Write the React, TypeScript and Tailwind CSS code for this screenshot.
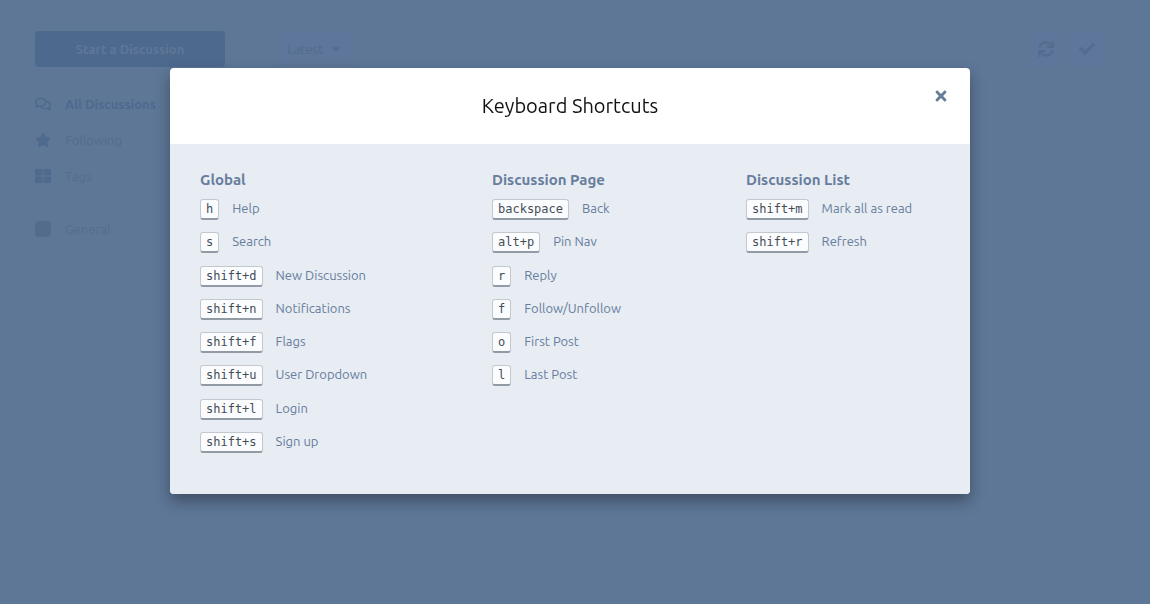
import { FaCaretDown, FaCheck, FaRegComments, FaStar, FaSync, FaThLarge, FaTimes } from 'react-icons/fa';

type Shortcut = { keys: string; label: string };

const groups: { title: string; shortcuts: Shortcut[] }[] = [
  {
    title: 'Global',
    shortcuts: [
      { keys: 'h', label: 'Help' },
      { keys: 's', label: 'Search' },
      { keys: 'shift+d', label: 'New Discussion' },
      { keys: 'shift+n', label: 'Notifications' },
      { keys: 'shift+f', label: 'Flags' },
      { keys: 'shift+u', label: 'User Dropdown' },
      { keys: 'shift+l', label: 'Login' },
      { keys: 'shift+s', label: 'Sign up' },
    ],
  },
  {
    title: 'Discussion Page',
    shortcuts: [
      { keys: 'backspace', label: 'Back' },
      { keys: 'alt+p', label: 'Pin Nav' },
      { keys: 'r', label: 'Reply' },
      { keys: 'f', label: 'Follow/Unfollow' },
      { keys: 'o', label: 'First Post' },
      { keys: 'l', label: 'Last Post' },
    ],
  },
  {
    title: 'Discussion List',
    shortcuts: [
      { keys: 'shift+m', label: 'Mark all as read' },
      { keys: 'shift+r', label: 'Refresh' },
    ],
  },
];

function IndexPage() {
  return (
    <div className="mx-auto flex max-w-[1140px] gap-[51px] px-[35px] pt-[31px] leading-5 text-[#536c8f]">
      <nav className="w-[190px] shrink-0">
        <button className="h-9 w-full rounded bg-[#4d698e] font-bold text-[#5e7797]">Start a Discussion</button>
        <ul className="mt-[19px]">
          <li>
            <a href="#all" className="flex h-9 items-center gap-3.5 font-bold text-[#4d698e]">
              <FaRegComments className="size-4" />
              All Discussions
            </a>
          </li>
          <li>
            <a href="#following" className="flex h-9 items-center gap-3.5">
              <FaStar className="size-4 text-[#4f6a8f]" />
              Following
            </a>
          </li>
          <li>
            <a href="#tags" className="flex h-9 items-center gap-3.5">
              <FaThLarge className="size-4 text-[#4f6a8f]" />
              Tags
            </a>
          </li>
          <li className="mt-[17px]">
            <a href="#general" className="flex h-9 items-center gap-3.5">
              <span className="size-4 rounded bg-[#556b8b]" />
              General
            </a>
          </li>
        </ul>
      </nav>
      <div className="flex h-9 grow items-start justify-between">
        <button className="flex h-9 items-center gap-1.5 rounded bg-[#5d7699] px-[11px]">
          Latest
          <FaCaretDown className="size-3.5" />
        </button>
        <div className="flex gap-[5px]">
          <button aria-label="Refresh" className="flex size-9 items-center justify-center rounded bg-[#5d7699]">
            <FaSync className="size-4" />
          </button>
          <button aria-label="Mark all as read" className="flex size-9 items-center justify-center rounded bg-[#5d7699]">
            <FaCheck className="size-4" />
          </button>
        </div>
      </div>
    </div>
  );
}

function ShortcutsDialog() {
  return (
    <div
      role="dialog"
      aria-modal="true"
      aria-labelledby="shortcuts-title"
      className="mx-auto max-w-[800px] overflow-hidden rounded bg-white shadow-[0_7px_15px_rgba(0,0,0,0.35)]"
    >
      <header className="relative flex h-[76px] items-center justify-center">
        <h1 id="shortcuts-title" className="text-xl text-[#111111]">
          Keyboard Shortcuts
        </h1>
        <button aria-label="Close" className="absolute top-2.5 right-[11px] flex size-9 items-center justify-center text-[#667d99]">
          <FaTimes className="size-4" />
        </button>
      </header>
      <div className="grid grid-cols-[292fr_254fr_194fr] bg-[#e8ecf3] px-[30px] pt-[26px] pb-[29px] text-[#667d9d]">
        {groups.map((group) => (
          <section key={group.title}>
            <h2 className="text-[15px] leading-5 font-bold">{group.title}</h2>
            <ul className="mt-[9px] grid h-[266px] grid-rows-8">
              {group.shortcuts.map((shortcut) => (
                <li key={shortcut.keys} className="flex items-start gap-[13px] leading-[18px]">
                  <kbd className="rounded-[3px] border border-b-2 border-[#c3c8cf] border-b-[#929aa5] bg-[#fbfcfe] px-[5px] font-['DejaVu_Sans_Mono',monospace] text-xs leading-[18px] text-[#444d56]">
                    {shortcut.keys}
                  </kbd>
                  {shortcut.label}
                </li>
              ))}
            </ul>
          </section>
        ))}
      </div>
    </div>
  );
}

export default function App() {
  return (
    <div className="min-h-screen bg-[#5e7797] pr-2.5 font-['Ubuntu','Noto_Sans',sans-serif] text-[13px]">
      <IndexPage />
      <div className="fixed inset-0 overflow-y-auto pt-[68px] pr-2.5">
        <ShortcutsDialog />
      </div>
    </div>
  );
}
